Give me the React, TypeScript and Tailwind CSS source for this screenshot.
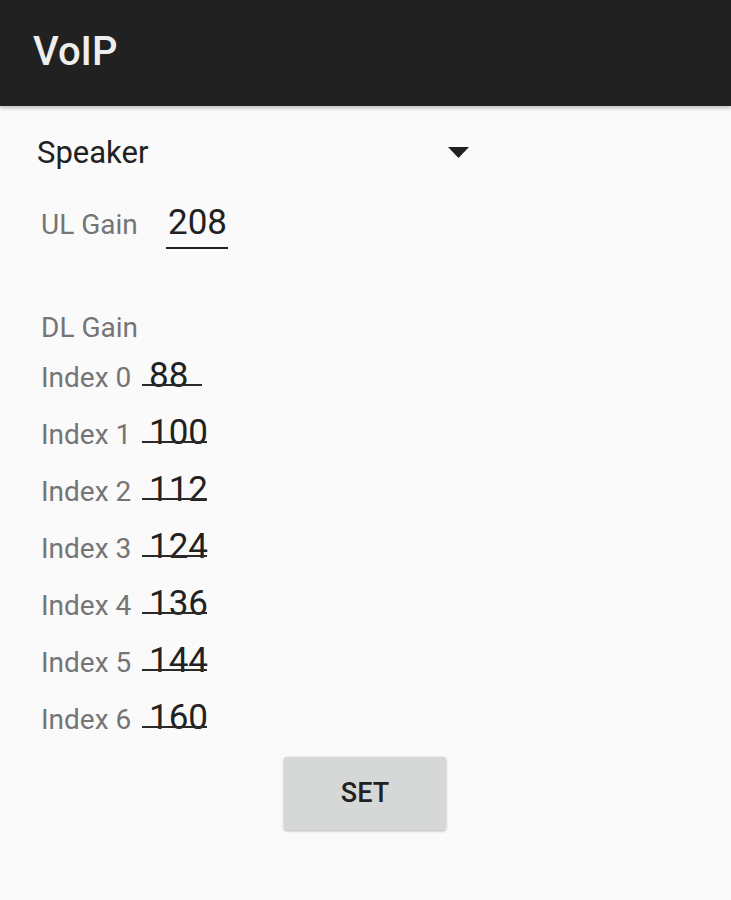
import React from "react";

const gains = [
  { label: "Index 0", value: "88", line: "w-[60px]" },
  { label: "Index 1", value: "100", line: "w-[65px]" },
  { label: "Index 2", value: "112", line: "w-[65px]" },
  { label: "Index 3", value: "124", line: "w-[65px]" },
  { label: "Index 4", value: "136", line: "w-[65px]" },
  { label: "Index 5", value: "144", line: "w-[65px]" },
  { label: "Index 6", value: "160", line: "w-[65px]" },
];

export default function App() {
  return (
    <div
      className="min-h-[900px] w-[731px] bg-[#fafafa]"
      style={{ fontFamily: "Roboto, 'Noto Sans', sans-serif" }}
    >
      <header className="relative z-10 h-[106px] bg-[#212121] pl-[33px] pt-[32px] shadow-[0_2px_4px_rgba(0,0,0,0.25)]">
        <h1 className="text-[40px] font-medium leading-none text-[#eeeeee]">VoIP</h1>
      </header>

      <div className="mt-[31px] flex h-[31px] w-[480px] items-center justify-between pl-[37px] pr-[11px]">
        <span className="text-[31px] leading-none text-[#212121]">Speaker</span>
        <svg width="21" height="11" viewBox="0 0 21 11">
          <path d="M0 0h21L10.5 11z" fill="#212121" />
        </svg>
      </div>

      <div className="mt-[37px] flex items-baseline pl-[41px]">
        <span className="w-[125px] text-[28px] leading-none text-[#757575]">UL Gain</span>
        <div className="relative text-[35px] leading-none text-[#212121]">
          <span className="pl-[2px]">208</span>
          <div className="absolute left-0 top-[42px] h-[2px] w-[62px] bg-[#212121]" />
        </div>
      </div>

      <div className="mt-[74px] pl-[41px] text-[28px] leading-none text-[#757575]">DL Gain</div>

      <div className="mt-[16px] flex flex-col gap-[22px]">
        {gains.map((g) => (
          <div key={g.label} className="flex items-baseline pl-[41px]">
            <span className="w-[101px] text-[28px] leading-none text-[#757575]">{g.label}</span>
            <div className="relative text-[35px] leading-none text-[#212121]">
              <span className="pl-[7px]">{g.value}</span>
              <div className={`absolute left-0 top-[26px] h-[2px] bg-[#2a2a2a] ${g.line}`} />
            </div>
          </div>
        ))}
      </div>

      <div className="mt-[22px] pl-[284px]">
        <button
          type="button"
          className="flex h-[73px] w-[162px] items-center justify-center rounded-[3px] bg-[#d6d7d7] text-[27px] font-medium text-[#212121] shadow-[0_1px_3px_rgba(0,0,0,0.3)]"
        >
          SET
        </button>
      </div>
    </div>
  );
}
